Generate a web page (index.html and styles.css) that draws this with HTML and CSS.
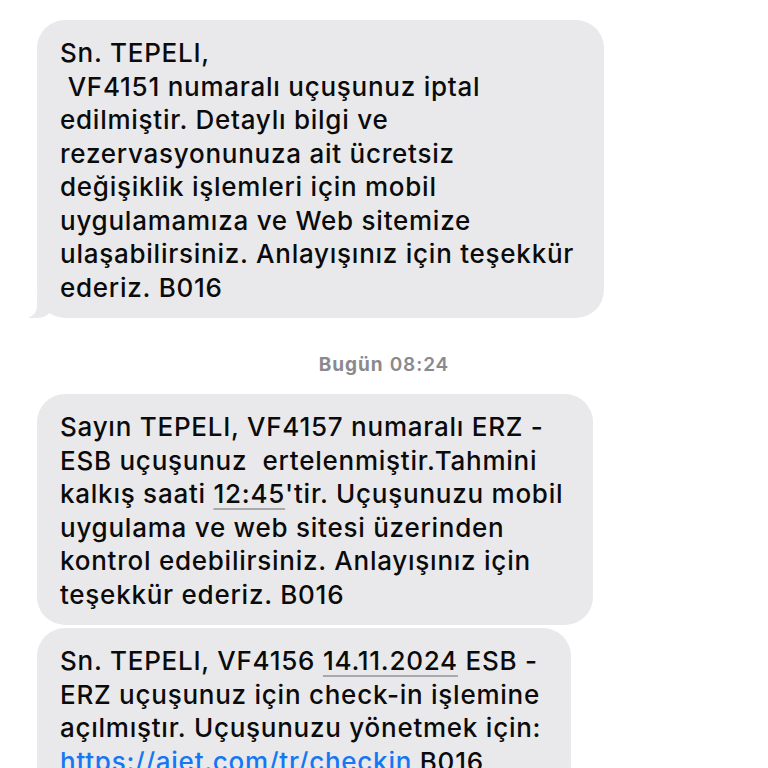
FILE: index.html
```html
<!DOCTYPE html>
<html lang="tr">
<head>
<meta charset="utf-8">
<title>Mesajlar</title>
<link rel="stylesheet" href="styles.css">
</head>
<body>
<main class="thread">
  <div class="bubble tail"><div class="line">Sn. TEPELI,</div><div class="line"> VF4151 numaralı uçuşunuz iptal</div><div class="line">edilmiştir. Detaylı bilgi ve</div><div class="line">rezervasyonunuza ait ücretsiz</div><div class="line">değişiklik işlemleri için mobil</div><div class="line">uygulamamıza ve Web sitemize</div><div class="line">ulaşabilirsiniz. Anlayışınız için teşekkür</div><div class="line">ederiz. B016</div></div>

  <div class="stamp"><span class="day">Bugün</span> <span class="time">08:24</span></div>

  <div class="bubble"><div class="line">Sayın TEPELI, VF4157 numaralı ERZ -</div><div class="line">ESB uçuşunuz  ertelenmiştir.Tahmini</div><div class="line">kalkış saati <span class="detect">12:45</span>'tir. Uçuşunuzu mobil</div><div class="line">uygulama ve web sitesi üzerinden</div><div class="line">kontrol edebilirsiniz. Anlayışınız için</div><div class="line">teşekkür ederiz. B016</div></div>

  <div class="bubble next"><div class="line">Sn. TEPELI, VF4156 <span class="detect">14.11.2024</span> ESB -</div><div class="line">ERZ uçuşunuz için check-in işlemine</div><div class="line">açılmıştır. Uçuşunuzu yönetmek için:</div><div class="line"><span class="link">https://ajet.com/tr/checkin</span> B016</div></div>
</main>
</body>
</html>
```
FILE: styles.css
```css
html, body {
  margin: 0;
  padding: 0;
  background: #ffffff;
}

body {
  font-family: Inter, "Noto Sans", "Liberation Sans", sans-serif;
  color: #0b0b0b;
  overflow: hidden;
  height: 768px;
}

.thread {
  display: flex;
  flex-direction: column;
  align-items: flex-start;
  padding: 20px 0 0 37px;
}

.bubble {
  position: relative;
  background: #e9e9eb;
  border-radius: 28px;
  padding: 16px 30px 14px 23px;
  font-size: 26px;
  line-height: 33.5px;
  letter-spacing: 0.75px;
  font-weight: 500;
}

.line {
  white-space: pre;
}

.bubble.next {
  margin-top: 3px;
}

.bubble.tail::before {
  content: "";
  position: absolute;
  left: -8px;
  bottom: 0;
  width: 26px;
  height: 24px;
  background: #e9e9eb;
  border-bottom-right-radius: 18px;
}

.bubble.tail::after {
  content: "";
  position: absolute;
  left: -14px;
  bottom: 0;
  width: 14px;
  height: 26px;
  background: #ffffff;
  border-bottom-right-radius: 12px;
}

.stamp {
  align-self: stretch;
  margin: 36px 37px 18px 0;
  text-align: center;
  font-size: 19px;
  line-height: 22px;
  color: #8a8a8e;
  letter-spacing: 0.9px;
}

.day {
  font-weight: 700;
}

.time {
  font-weight: 600;
}

.detect {
  text-decoration: underline;
  text-decoration-color: #a9a9ad;
  text-decoration-thickness: 2px;
  text-underline-offset: 5px;
}

.link {
  color: #1677f2;
  text-decoration: underline;
  text-decoration-thickness: 2px;
  text-underline-offset: 5px;
}
```
